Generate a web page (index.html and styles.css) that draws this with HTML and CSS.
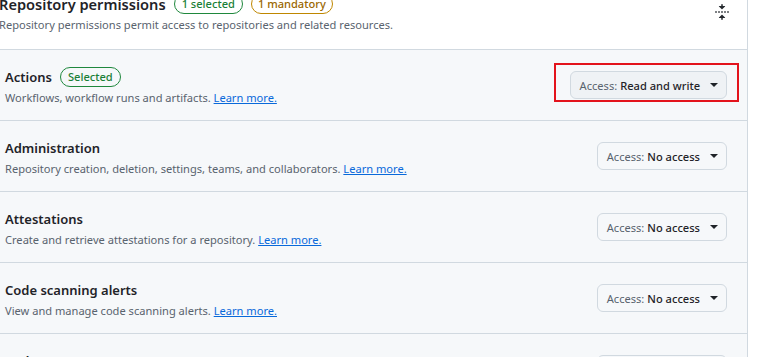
FILE: index.html
```html
<!DOCTYPE html>
<html lang="en">
<head>
<meta charset="utf-8">
<title>Repository permissions</title>
<link rel="stylesheet" href="styles.css">
</head>
<body>
<div class="panel">
  <div class="panel-header">
    <div class="header-main">
      <div class="header-title-line">
        <h3 class="header-title">Repository permissions</h3>
        <span class="badge badge-green">1 selected</span>
        <span class="badge badge-amber">1 mandatory</span>
      </div>
      <p class="header-desc">Repository permissions permit access to repositories and related resources.</p>
    </div>
    <button class="icon-btn" aria-label="Collapse">
      <svg width="16" height="16" viewBox="0 0 16 16" fill="#25292e"><path d="M10.896 2H8.75V.75a.75.75 0 0 0-1.5 0V2H5.104a.25.25 0 0 0-.177.427l2.896 2.896a.25.25 0 0 0 .354 0l2.896-2.896A.25.25 0 0 0 10.896 2ZM8.75 15.25a.75.75 0 0 1-1.5 0V14H5.104a.25.25 0 0 1-.177-.427l2.896-2.896a.25.25 0 0 1 .354 0l2.896 2.896a.25.25 0 0 1-.177.427H8.75v1.250Zm-6.5-6.5a.75.75 0 0 0 0-1.5h-.5a.75.75 0 0 0 0 1.5h.5ZM6 8a.75.75 0 0 1-.75.75h-.5a.75.75 0 0 1 0-1.5h.5A.75.75 0 0 1 6 8Zm2.25.75a.75.75 0 0 0 0-1.5h-.5a.75.75 0 0 0 0 1.5h.5ZM12 8a.75.75 0 0 1-.75.75h-.5a.75.75 0 0 1 0-1.5h.5A.75.75 0 0 1 12 8Zm2.25.75a.75.75 0 0 0 0-1.5h-.5a.75.75 0 0 0 0 1.5h.5Z"/></svg>
    </button>
  </div>
  <ul class="perm-list">
    <li class="perm-row">
      <div class="perm-info">
        <div class="perm-title-line">
          <span class="perm-title">Actions</span>
          <span class="badge badge-green">Selected</span>
        </div>
        <p class="perm-desc">Workflows, workflow runs and artifacts. <a href="#" class="learn">Learn more.</a></p>
      </div>
      <span class="highlight">
        <button class="access-btn access-btn-active"><span class="access-label">Access:</span> <span class="access-value">Read and write</span><span class="caret"></span></button>
      </span>
    </li>
    <li class="perm-row">
      <div class="perm-info">
        <div class="perm-title-line">
          <span class="perm-title">Administration</span>
        </div>
        <p class="perm-desc">Repository creation, deletion, settings, teams, and collaborators. <a href="#" class="learn">Learn more.</a></p>
      </div>
      <button class="access-btn"><span class="access-label">Access:</span> <span class="access-value">No access</span><span class="caret"></span></button>
    </li>
    <li class="perm-row">
      <div class="perm-info">
        <div class="perm-title-line">
          <span class="perm-title">Attestations</span>
        </div>
        <p class="perm-desc">Create and retrieve attestations for a repository. <a href="#" class="learn">Learn more.</a></p>
      </div>
      <button class="access-btn"><span class="access-label">Access:</span> <span class="access-value">No access</span><span class="caret"></span></button>
    </li>
    <li class="perm-row">
      <div class="perm-info">
        <div class="perm-title-line">
          <span class="perm-title">Code scanning alerts</span>
        </div>
        <p class="perm-desc">View and manage code scanning alerts. <a href="#" class="learn">Learn more.</a></p>
      </div>
      <button class="access-btn"><span class="access-label">Access:</span> <span class="access-value">No access</span><span class="caret"></span></button>
    </li>
    <li class="perm-row">
      <div class="perm-info">
        <div class="perm-title-line">
          <span class="perm-title">Codespaces</span>
        </div>
        <p class="perm-desc">Create, edit, run, and delete codespaces. <a href="#" class="learn">Learn more.</a></p>
      </div>
      <button class="access-btn"><span class="access-label">Access:</span> <span class="access-value">No access</span><span class="caret"></span></button>
    </li>
  </ul>
</div>
</body>
</html>
```
FILE: styles.css
```css
html, body {
  margin: 0;
  padding: 0;
  background: #ffffff;
  overflow: hidden;
}
body {
  font-family: "Noto Sans", "Liberation Sans", sans-serif;
  color: #1f2328;
  font-size: 11.1px;
}
.panel {
  box-sizing: border-box;
  width: 765px;
  margin-left: -17px;
  margin-top: -23px;
  border: 1px solid #d1d9e0;
  background: #ffffff;
}
.panel-header {
  display: flex;
  align-items: flex-start;
  padding: 14px 17px 15px 15px;
  border-bottom: 1px solid #d1d9e0;
}
.header-main {
  flex: 1;
}
.header-title-line {
  display: flex;
  align-items: center;
  gap: 8px;
  height: 24px;
}
.header-title {
  margin: 0;
  font-size: 14.6px;
  font-weight: 600;
  line-height: 24px;
}
.header-desc {
  margin: 0;
  color: #59636e;
  font-size: 11.1px;
  line-height: 18px;
}
.icon-btn {
  border: 0;
  background: transparent;
  padding: 0;
  margin-top: 12px;
  width: 16px;
  height: 16px;
  display: flex;
}
.badge {
  display: inline-flex;
  align-items: center;
  box-sizing: border-box;
  height: 20px;
  padding: 0 7px;
  border-radius: 999px;
  border: 1px solid;
  font-size: 11.1px;
  font-weight: 500;
  line-height: 18px;
}
.badge-green {
  color: #1a7f37;
  border-color: #1f883d;
}
.badge-amber {
  color: #9a6700;
  border-color: #bf8700;
  padding: 0 6px;
}
.perm-list {
  list-style: none;
  margin: 0;
  padding: 0;
  background: #f6f8fa;
}
.perm-row {
  display: flex;
  align-items: center;
  justify-content: space-between;
  height: 70px;
  box-sizing: content-box;
  padding: 0 20px 0 21px;
  border-top: 1px solid #d1d9e0;
}
.perm-row:first-child {
  border-top: 0;
}
.perm-info {
  display: flex;
  flex-direction: column;
  padding-top: 3px;
}
.perm-title-line {
  display: flex;
  align-items: center;
  gap: 8px;
  height: 20px;
}
.perm-title {
  font-size: 13px;
  font-weight: 600;
  line-height: 20px;
}
.perm-desc {
  margin: 2px 0 0;
  color: #59636e;
  font-size: 11.1px;
  line-height: 18px;
}
.learn {
  color: #0969da;
  text-decoration: underline;
}
.highlight {
  position: relative;
  display: inline-flex;
}
.highlight::after {
  content: "";
  position: absolute;
  top: -8px;
  bottom: -3px;
  left: -16px;
  right: -12px;
  border: 2px solid #e3131c;
  pointer-events: none;
}
.access-btn {
  display: inline-flex;
  align-items: center;
  height: 28px;
  box-sizing: border-box;
  padding: 0 8px 0 9px;
  border: 1px solid #d1d9e0;
  border-radius: 6px;
  background: #f6f8fa;
  font-family: inherit;
  font-size: 11.1px;
  color: #1f2328;
  cursor: pointer;
}
.access-btn-active {
  background: #eff2f5;
}
.access-label {
  color: #59636e;
  margin-right: 3px;
}
.access-value {
  color: #1f2328;
  font-weight: 500;
}
.caret {
  width: 0;
  height: 0;
  margin-left: 10px;
  border-left: 4px solid transparent;
  border-right: 4px solid transparent;
  border-top: 4px solid #1f2328;
}
```
